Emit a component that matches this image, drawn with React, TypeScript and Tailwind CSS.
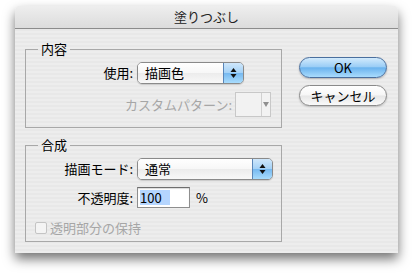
import React from "react";

const font = { fontFamily: '"Noto Sans CJK JP", "Noto Sans", sans-serif' };

function Arrows() {
  return (
    <svg width="7" height="12" viewBox="0 0 7 12">
      <path d="M3.5 1 L6.5 5 L0.5 5 Z" fill="#111" />
      <path d="M3.5 11 L6.5 7 L0.5 7 Z" fill="#111" />
    </svg>
  );
}

function Popup({ text, width }: { text: string; width: string }) {
  return (
    <div
      className={`${width} h-[22px] flex rounded-[5px] border border-[#8a8a8a] overflow-hidden shadow-[0_1px_1px_rgba(0,0,0,0.15)]`}
    >
      <div className="flex-1 flex items-center pl-[7px] text-[13px] text-black bg-[linear-gradient(180deg,#ffffff_0%,#f7f7f7_50%,#ececec_52%,#f8f8f8_100%)]">
        {text}
      </div>
      <div className="w-[20px] flex items-center justify-center border-l border-[#5a86b8] bg-[linear-gradient(180deg,#cfe7fb_0%,#a5d2f7_48%,#77b9f0_52%,#a8dcfd_100%)]">
        <Arrows />
      </div>
    </div>
  );
}

export default function App() {
  return (
    <div className="w-[413px] h-[277px] bg-white pt-[6px] pl-[15px]" style={font}>
      <div className="w-[383px] h-[247px] rounded-t-[5px] flex flex-col overflow-hidden shadow-[0_6px_12px_rgba(0,0,0,0.55)] bg-[repeating-linear-gradient(0deg,#ededed_0px,#ededed_2px,#e8e8e8_2px,#e8e8e8_4px)]">
        <div className="h-[23px] flex items-center justify-center border-b border-[#8c8c8c] text-[13px] text-[#222] bg-[linear-gradient(180deg,#eeeeee_0%,#dcdcdc_100%)]">
          塗りつぶし
        </div>
        <div className="flex pl-[10px] pt-[12px]">
          <div className="w-[257px] flex flex-col gap-[9px]">
            <fieldset className="border border-[#a8a8a8] px-0 pb-[10px]">
              <legend className="ml-[12px] px-[3px] text-[13px] leading-[16px] text-black">内容</legend>
              <div className="flex items-center pt-[5px]">
                <div className="w-[108px] text-right text-[13px] text-black pr-[1px]">使用:</div>
                <div className="ml-[3px]">
                  <Popup text="描画色" width="w-[107px]" />
                </div>
              </div>
              <div className="flex items-center justify-end pr-[10px] mt-[8px]">
                <div className="text-[13px] text-[#a6a6a6] mr-[3px]">カスタムパターン:</div>
                <div className="w-[36px] h-[25px] flex border border-[#c8c8c8] bg-[#f2f2f2]">
                  <div className="flex-1" />
                  <div className="w-[9px] border-l border-[#d0d0d0] flex items-center justify-center">
                    <svg width="6" height="5" viewBox="0 0 6 5">
                      <path d="M0 0 L6 0 L3 5 Z" fill="#8f8f8f" />
                    </svg>
                  </div>
                </div>
              </div>
            </fieldset>
            <fieldset className="border border-[#a8a8a8] px-0 pb-[3px]">
              <legend className="ml-[12px] px-[3px] text-[13px] leading-[16px] text-black">合成</legend>
              <div className="flex items-center pt-[5px]">
                <div className="w-[108px] text-right text-[13px] text-black pr-[1px]">描画モード:</div>
                <div className="ml-[3px]">
                  <Popup text="通常" width="w-[136px]" />
                </div>
              </div>
              <div className="flex items-center mt-[7px]">
                <div className="w-[108px] text-right text-[13px] text-black pr-[1px]">不透明度:</div>
                <div className="ml-[3px] w-[53px] h-[21px] border border-[#8e8e8e] border-t-[#6e6e6e] bg-white flex items-center pl-[2px] shadow-[inset_0_1px_1px_rgba(0,0,0,0.15)]">
                  <span className="text-[13px] text-black bg-[#b5d5fe] leading-[15px] pr-[8px]">100</span>
                </div>
                <div className="ml-[6px] text-[13px] text-black">%</div>
              </div>
              <div className="flex items-center mt-[10px] pl-[9px]">
                <div className="w-[12px] h-[12px] rounded-[2px] border border-[#c4c4c4] bg-[#f4f4f4]" />
                <div className="ml-[3px] text-[13px] text-[#a6a6a6]">透明部分の保持</div>
              </div>
            </fieldset>
          </div>
          <div className="ml-[17px] mt-[16px] w-[88px] flex flex-col gap-[7px]">
            <div className="h-[21px] rounded-full border border-[#4a6f9e] flex items-center justify-center text-[13px] text-black bg-[linear-gradient(180deg,#d2eafc_0%,#9ccef6_45%,#6bb3ee_52%,#a9dcfd_100%)] shadow-[0_1px_2px_rgba(0,0,0,0.25)]">
              OK
            </div>
            <div className="h-[21px] rounded-full border border-[#8a8a8a] flex items-center justify-center text-[13px] text-black bg-[linear-gradient(180deg,#ffffff_0%,#f6f6f6_48%,#e6e6e6_52%,#fafafa_100%)] shadow-[0_1px_2px_rgba(0,0,0,0.2)]">
              キャンセル
            </div>
          </div>
        </div>
      </div>
    </div>
  );
}
